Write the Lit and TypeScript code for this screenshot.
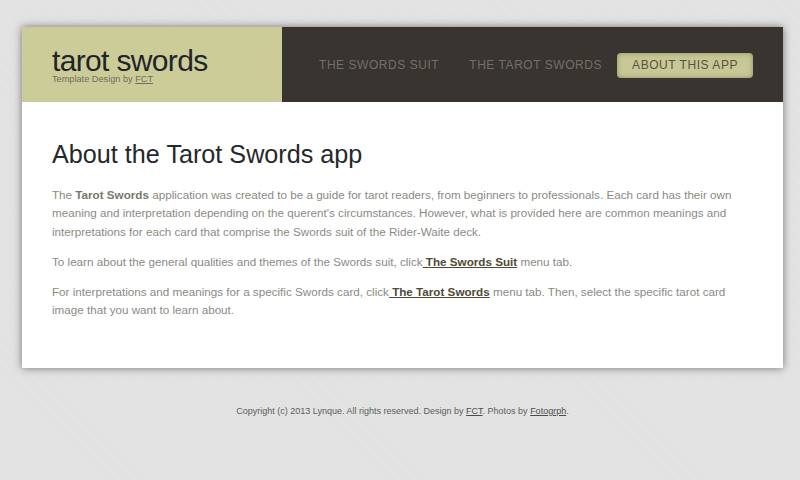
import { LitElement, html, css } from "lit";
import { customElement } from "lit/decorators.js";

@customElement("app-root")
export class AppRoot extends LitElement {
  static styles = css`
    :host {
      display: block;
      width: 800px;
      height: 480px;
      overflow: hidden;
      font-family: "Liberation Sans", Arial, sans-serif;
      background-color: #e1e1e1;
      background-image:
        repeating-linear-gradient(45deg, rgba(255,255,255,0.14) 0 1px, transparent 1px 3px);
      box-sizing: border-box;
      padding: 27px 17px 0 22px;
    }
    .card {
      background: #fff;
      height: 341px;
      box-shadow: 0 0 8px rgba(0,0,0,0.5);
      display: flex;
      flex-direction: column;
    }
    header { display: flex; height: 75px; background: #38342f; }
    .brand {
      width: 260px;
      background: #cccc99;
      box-sizing: border-box;
      padding: 17px 0 0 30px;
    }
    .logo {
      font-size: 30px;
      line-height: 33px;
      letter-spacing: -0.65px;
      color: #1f2429;
      white-space: nowrap;
    }
    .tag { font-size: 9.2px; line-height: 10px; margin-top: -3px; color: #6f6d5c; white-space: nowrap; }
    .tag a { color: #6f6d5c; text-decoration: underline; }
    nav {
      flex: 1;
      display: flex;
      align-items: center;
      padding: 2px 0 0 22px;
    }
    nav a {
      font-size: 12px;
      letter-spacing: 0.55px;
      color: #72706b;
      padding: 5px 15px 6px;
      line-height: 14px;
      border-radius: 4px;
      white-space: nowrap;
    }
    nav a.on {
      color: #55533f;
      background: #c8c897;
      box-shadow: inset 0 0 5px rgba(90,90,50,0.55);
    }
    main { padding: 36px 30px 0; }
    h1 {
      margin: 0 0 16px;
      font-weight: normal;
      font-size: 25.2px;
      line-height: 32px;
      color: #25282b;
    }
    p {
      margin: 0 0 11.6px;
      font-size: 11.66px;
      line-height: 18.4px;
      color: #8a8a84;
    }
    p b { color: #77776f; }
    p a { color: #4f4a36; font-weight: bold; text-decoration: underline; }
    footer {
      margin-top: 37px;
      text-align: center;
      font-size: 9px;
      line-height: 12px;
      color: #5c5c5c;
    }
    footer a { color: #4c4c4c; text-decoration: underline; }
  `;

  render() {
    return html`
      <div class="card">
        <header>
          <div class="brand">
            <div class="logo">tarot swords</div>
            <div class="tag">Template Design by <a>FCT</a></div>
          </div>
          <nav>
            <a>THE SWORDS SUIT</a>
            <a>THE TAROT SWORDS</a>
            <a class="on">ABOUT THIS APP</a>
          </nav>
        </header>
        <main>
          <h1>About the Tarot Swords app</h1>
          <p>The <b>Tarot Swords</b> application was created to be a guide for tarot readers, from beginners to professionals. Each card has their own meaning and interpretation depending on the querent's circumstances. However, what is provided here are common meanings and interpretations for each card that comprise the Swords suit of the Rider-Waite deck.</p>
          <p>To learn about the general qualities and themes of the Swords suit, click<a> The Swords Suit</a> menu tab.</p>
          <p>For interpretations and meanings for a specific Swords card, click<a> The Tarot Swords</a> menu tab. Then, select the specific tarot card image that you want to learn about.</p>
        </main>
      </div>
      <footer>Copyright (c) 2013 Lynque. All rights reserved. Design by <a>FCT</a>. Photos by <a>Fotogrph</a>.</footer>
    `;
  }
}
